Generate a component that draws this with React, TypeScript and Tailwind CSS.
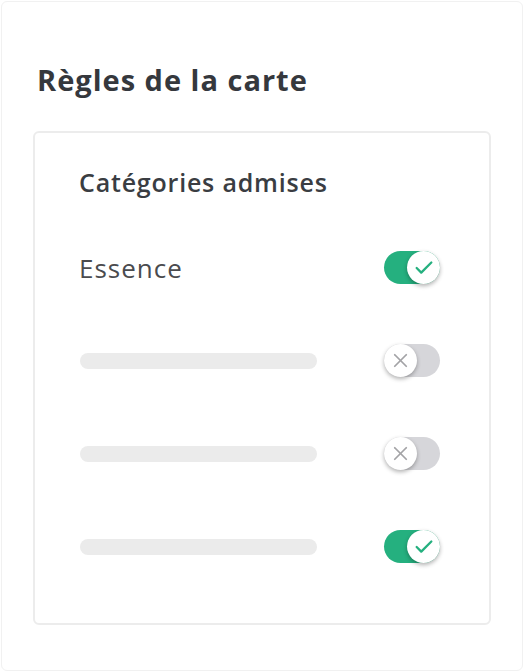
import { Check, X } from "lucide-react";

function Toggle({ on }: { on: boolean }) {
  return (
    <div
      className={`relative h-[33px] w-[56px] rounded-full ${
        on ? "bg-[#25b07f]" : "bg-[#d6d6da]"
      }`}
    >
      <div
        className={`absolute top-0 flex h-[33px] w-[33px] items-center justify-center rounded-full bg-white shadow-[0_2px_4px_rgba(0,0,0,0.3)] ${
          on ? "right-0" : "left-0"
        }`}
      >
        {on ? (
          <Check className="h-[22px] w-[22px] text-[#25b07f]" strokeWidth={2.5} />
        ) : (
          <X className="h-[23px] w-[23px] text-[#a3a3a6]" strokeWidth={1.8} />
        )}
      </div>
    </div>
  );
}

const rows = [
  { label: "Essence", on: true },
  { label: null, on: false },
  { label: null, on: false },
  { label: null, on: true },
];

export default function App() {
  return (
    <div
      className="h-[672px] w-[524px] bg-white p-px"
      style={{ fontFamily: "'Open Sans', 'Noto Sans', sans-serif" }}
    >
      <div className="h-full rounded-md border border-[#f1f1f1] px-[31px]">
        <h1 className="pl-[4px] pt-[62px] text-[29px] font-bold leading-[32px] tracking-[1px] text-[#35383d]">
          Règles de la carte
        </h1>
        <div className="mt-[35px] h-[494px] rounded-md border-2 border-[#ececec] pl-[44px] pr-[49px]">
          <div className="pt-[35px] text-[25px] font-semibold leading-[28px] tracking-[0.8px] text-[#3a3d42]">
            Catégories admises
          </div>
          <div className="mt-[25px] flex flex-col">
            {rows.map((r, i) => (
              <div key={i} className="flex h-[93px] items-center justify-between">
                {r.label ? (
                  <span className="text-[26px] leading-[28px] tracking-[1px] text-[#4a4b4e]">
                    {r.label}
                  </span>
                ) : (
                  <div className="ml-px h-[16px] w-[237px] rounded-full bg-[#ebebeb]" />
                )}
                <Toggle on={r.on} />
              </div>
            ))}
          </div>
        </div>
      </div>
    </div>
  );
}
